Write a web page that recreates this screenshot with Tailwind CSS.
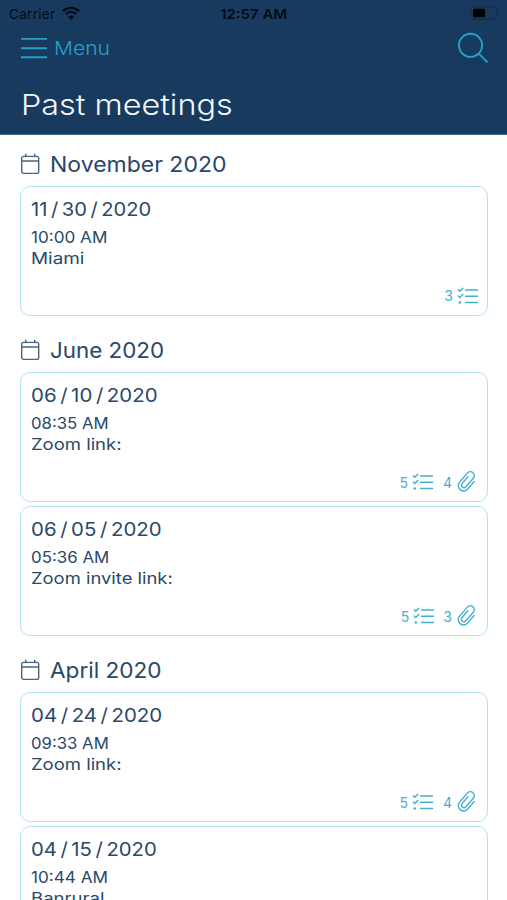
<!DOCTYPE html>
<html lang="en">
<head>
<meta charset="utf-8">
<meta name="viewport" content="width=device-width">
<title>Past meetings</title>
<script src="https://cdn.jsdelivr.net/npm/@tailwindcss/browser@4"></script>
</head>
<body class="w-[507px] h-[900px] overflow-hidden bg-white font-['Inter','Liberation_Sans',sans-serif] font-[370] text-[#2a4868]">
<svg class="hidden">
  <symbol id="cal" viewBox="0 0 20 22"><g fill="none" stroke="#4b647e" stroke-width="1.4"><rect x="1.7" y="3.4" width="17" height="17" rx="2"/><path d="M1.7 8h17M5.700 .8v3.400M14.700 .8v3.400"/></g></symbol>
  <symbol id="list" viewBox="0 0 22 18"><g fill="none" stroke="#42b1cf" stroke-width="1.5" stroke-linecap="round" stroke-linejoin="round"><path d="M8.500 3h12M8.500 9.200h12M8.500 15.500h12" /><path d="M1.300 2.800l1.500 1.500 3-3M1.300 9l1.500 1.500 3-3"/></g><circle cx="2.800" cy="15.500" r="1.300" fill="#42b1cf"/></symbol>
  <symbol id="clip" viewBox="0 0 22 22"><path transform="rotate(41 11 11)" d="M8.300 6.500v8.800a2.500 2.500 0 0 0 5 0V4a3.900 3.900 0 0 0-7.800 0v12a5.300 5.300 0 0 0 10.600 0V6" fill="none" stroke="#42b1cf" stroke-width="1.400" stroke-linecap="round" stroke-linejoin="round"/></symbol>
</svg>
<header class="h-[135px] bg-[#173a5e] border-b border-[#426882]">
  <div class="grid grid-cols-3 items-center h-7 pl-[9px] pr-2 text-[13.5px] text-[#050b12]">
    <div class="flex items-center gap-[7px]"><span class="tracking-[0.3px] font-normal">Carrier</span>
      <svg class="-translate-y-px" width="18" height="14" viewBox="0 0 18 14" fill="none" stroke="#050b12" stroke-width="2.400"><path d="M1 5.200c4.500-4.500 11.500-4.500 16 0M3.900 8.200c3-2.900 7.200-2.900 10.200 0"/><path d="M9 13.700l-2.900-3q2.900-2.400 5.800 0z" fill="#050b12" stroke="none"/></svg>
    </div>
    <div class="text-center font-semibold whitespace-nowrap scale-x-[1.11]">12:57 AM</div>
    <svg class="justify-self-end -translate-y-px" width="30" height="14" viewBox="0 0 30 14"><rect x="2" y=".7" width="25.500" height="12.600" rx="3" fill="none" stroke="#102e4c"/><rect x="4" y="2.700" width="12" height="8.600" rx="1.200" fill="#000"/><path d="M28.500 4.500q2.500 2.500 0 5z" fill="#102e4c"/></svg>
  </div>
  <div class="flex items-center justify-between h-10 pl-[21px] pr-[19px]">
    <div class="flex items-center gap-[7px] text-[#28a1c5]">
      <svg width="26" height="22" viewBox="0 0 26 22" stroke="#28a1c5" stroke-width="1.900"><path d="M0 1.900h26M0 11.200h26M0 20.300h26"/></svg>
      <span class="inline-block origin-left scale-x-[1.11] translate-y-px text-[19px] font-light">Menu</span>
    </div>
    <svg width="31" height="32" viewBox="0 0 31 32" fill="none" stroke="#28a1c5" stroke-width="1.900" stroke-linecap="round"><circle cx="13.500" cy="13.300" r="11.600"/><path d="M21.800 21.600l8.200 8.200"/></svg>
  </div>
  <h1 class="pl-[21px] pt-[17px] text-[28px] leading-[40px] font-light text-[#f4f8fb]"><span class="inline-block origin-left scale-x-[1.155]">Past meetings</span></h1>
</header>
<main class="pl-5 pr-[19px]">
  <section>
    <h2 class="flex items-center h-[51px] pt-[7px] text-[21.500px] leading-7"><svg class="mr-[10px]" width="20" height="22"><use href="#cal"/></svg><span class="inline-block origin-left scale-x-[1.07]">November 2020</span></h2>
    <article class="relative h-[130px] border-[1.500px] border-[#b4e2f0] rounded-[10px] pl-[9.500px] pt-[9px]">
      <h3 class="text-[19px] leading-[28px] [word-spacing:-2px]"><span class="inline-block origin-left scale-x-[1.06]">11 / 30 / 2020</span></h3>
      <p class="text-[16px] leading-[21px] pt-[3px]"><span class="inline-block origin-left scale-x-[1.07]">10:00 AM</span><br><span class="inline-block origin-left scale-x-[1.18]">Miami</span></p>
      <div class="absolute right-[8px] bottom-[9px] flex items-center text-[14px] text-[#42b1cf]"><span class="mr-1">3</span><svg width="22" height="18"><use href="#list"/></svg></div>
    </article>
  </section>
  <section>
    <h2 class="flex items-center h-[56px] pt-[11px] text-[21.500px] leading-7"><svg class="mr-[10px]" width="20" height="22"><use href="#cal"/></svg><span class="inline-block origin-left scale-x-[1.04]">June 2020</span></h2>
    <article class="relative h-[130px] border-[1.500px] border-[#b4e2f0] rounded-[10px] pl-[9.500px] pt-[9px]">
      <h3 class="text-[19px] leading-[28px] [word-spacing:-2px]"><span class="inline-block origin-left scale-x-[1.075]">06 / 10 / 2020</span></h3>
      <p class="text-[16px] leading-[21px] pt-[3px]"><span class="inline-block origin-left scale-x-[1.045]">08:35 AM</span><br><span class="inline-block origin-left scale-x-[1.155]">Zoom link:</span></p>
      <div class="absolute right-[9px] bottom-[8px] flex items-center text-[14px] text-[#42b1cf]"><span class="mr-1 -translate-x-px">5</span><svg class="-translate-x-px" width="22" height="18"><use href="#list"/></svg><span class="ml-2 mr-1">4</span><svg class="overflow-visible" width="22" height="22"><use href="#clip"/></svg></div>
    </article>
    <article class="relative h-[130px] mt-[4px] border-[1.500px] border-[#b4e2f0] rounded-[10px] pl-[9.500px] pt-[9px]">
      <h3 class="text-[19px] leading-[28px] [word-spacing:-2px]"><span class="inline-block origin-left scale-x-[1.075]">06 / 05 / 2020</span></h3>
      <p class="text-[16px] leading-[21px] pt-[3px]"><span class="inline-block origin-left scale-x-[1.055]">05:36 AM</span><br><span class="inline-block origin-left scale-x-[1.15]">Zoom invite link:</span></p>
      <div class="absolute right-[9px] bottom-[8px] flex items-center text-[14px] text-[#42b1cf]"><span class="mr-1">5</span><svg width="22" height="18"><use href="#list"/></svg><span class="ml-2 mr-1">3</span><svg class="overflow-visible" width="22" height="22"><use href="#clip"/></svg></div>
    </article>
  </section>
  <section>
    <h2 class="flex items-center h-[56px] pt-[11px] text-[21.500px] leading-7"><svg class="mr-[10px]" width="20" height="22"><use href="#cal"/></svg><span class="inline-block origin-left scale-x-[1.05]">April 2020</span></h2>
    <article class="relative h-[130px] border-[1.500px] border-[#b4e2f0] rounded-[10px] pl-[9.500px] pt-[9px]">
      <h3 class="text-[19px] leading-[28px] [word-spacing:-2px]"><span class="inline-block origin-left scale-x-[1.075]">04 / 24 / 2020</span></h3>
      <p class="text-[16px] leading-[21px] pt-[3px]"><span class="inline-block origin-left scale-x-[1.045]">09:33 AM</span><br><span class="inline-block origin-left scale-x-[1.155]">Zoom link:</span></p>
      <div class="absolute right-[9px] bottom-[8px] flex items-center text-[14px] text-[#42b1cf]"><span class="mr-1 -translate-x-px">5</span><svg class="-translate-x-px" width="22" height="18"><use href="#list"/></svg><span class="ml-2 mr-1">4</span><svg class="overflow-visible" width="22" height="22"><use href="#clip"/></svg></div>
    </article>
    <article class="relative h-[130px] mt-[4px] border-[1.500px] border-[#b4e2f0] rounded-[10px] pl-[9.500px] pt-[9px]">
      <h3 class="text-[19px] leading-[28px] [word-spacing:-2px]"><span class="inline-block origin-left scale-x-[1.068]">04 / 15 / 2020</span></h3>
      <p class="text-[16px] leading-[21px] pt-[3px]"><span class="inline-block origin-left scale-x-[1.07]">10:44 AM</span><br><span class="inline-block origin-left scale-x-[1.16]">Banrural</span></p>
    </article>
  </section>
</main>
</body>
</html>
